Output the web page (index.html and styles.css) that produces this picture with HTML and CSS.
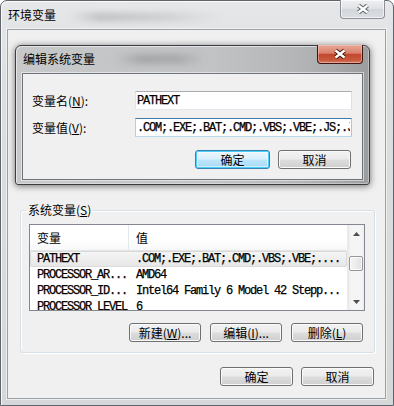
FILE: index.html
```html
<!DOCTYPE html>
<html lang="zh-CN">
<head>
<meta charset="utf-8">
<title>环境变量</title>
<link rel="stylesheet" href="styles.css">
</head>
<body>
<div class="window">
  <div class="titlebar">
    <span class="title">环境变量</span>
    <span class="haze haze-outer"></span>
    <span class="close close-inactive">
      <svg width="18" height="12" viewBox="0 0 18 12"><path d="M4.5 2.5 L13.5 9.5 M13.5 2.5 L4.5 9.5" stroke="#5d6166" stroke-width="4.4" fill="none"/><path d="M4.5 2.5 L13.5 9.5 M13.5 2.5 L4.5 9.5" stroke="#fff" stroke-width="2.4" fill="none"/></svg>
    </span>
  </div>
  <div class="client">
    <fieldset class="group">
      <legend>系统变量(<u>S</u>)</legend>
      <div class="listview">
        <div class="lv-body">
          <div class="lv-header">
            <div class="col c1">变量</div>
            <div class="col c2">值</div>
          </div>
          <div class="lv-row sel"><div class="col c1 mono">PATHEXT</div><div class="col c2 mono">.COM;.EXE;.BAT;.CMD;.VBS;.VBE;....</div></div>
          <div class="lv-row"><div class="col c1 mono">PROCESSOR_AR...</div><div class="col c2 mono">AMD64</div></div>
          <div class="lv-row"><div class="col c1 mono">PROCESSOR_ID...</div><div class="col c2 mono">Intel64 Family 6 Model 42 Stepp...</div></div>
          <div class="lv-row"><div class="col c1 mono">PROCESSOR_LEVEL</div><div class="col c2 mono">6</div></div>
        </div>
        <div class="vscroll">
          <div class="sb-btn"><svg width="7" height="4" viewBox="0 0 7 4"><path d="M0 4 L3.5 0 L7 4 Z" fill="#4d4d4d"/></svg></div>
          <div class="sb-track"><div class="sb-thumb"></div></div>
          <div class="sb-btn"><svg width="7" height="4" viewBox="0 0 7 4"><path d="M0 0 L3.5 4 L7 0 Z" fill="#4d4d4d"/></svg></div>
        </div>
      </div>
      <div class="btnrow group-btns">
        <button class="btn w72">新建(<u>W</u>)...</button>
        <button class="btn w72">编辑(<u>I</u>)...</button>
        <button class="btn w72">删除(<u>L</u>)</button>
      </div>
    </fieldset>
    <div class="btnrow bottom-btns">
      <button class="btn w73">确定</button>
      <button class="btn w73">取消</button>
    </div>
  </div>

  <div class="dialog">
    <div class="dlg-titlebar">
      <span class="dlg-title">编辑系统变量</span>
      <span class="haze haze-inner"></span>
      <span class="close close-active">
        <svg width="18" height="12" viewBox="0 0 18 12"><path d="M4.5 2.5 L13.5 9.5 M13.5 2.5 L4.5 9.5" stroke="#4a1a14" stroke-width="4.4" fill="none"/><path d="M4.5 2.5 L13.5 9.5 M13.5 2.5 L4.5 9.5" stroke="#fff" stroke-width="2.4" fill="none"/></svg>
      </span>
    </div>
    <div class="dlg-client">
      <div class="form">
        <label class="lbl">变量名(<u>N</u>):</label>
        <input class="textbox mono" readonly value="PATHEXT">
        <label class="lbl">变量值(<u>V</u>):</label>
        <input class="textbox focused mono" readonly value=".COM;.EXE;.BAT;.CMD;.VBS;.VBE;.JS;.JSE;.WSF;.WSH;.MSC">
      </div>
      <div class="btnrow dlg-btns">
        <button class="btn btn-default w75">确定</button>
        <button class="btn w73">取消</button>
      </div>
    </div>
  </div>
</div>
</body>
</html>
```

FILE: styles.css
```css
* { box-sizing: border-box; }
html, body { margin: 0; padding: 0; }
body {
  width: 394px;
  height: 406px;
  overflow: hidden;
  background: #fff;
  font-family: "Noto Sans CJK SC", "Noto Sans", sans-serif;
  font-size: 12px;
  color: #000;
}
u { text-decoration: underline; text-underline-offset: 1px; }

.mono {
  font-family: "Liberation Mono", "DejaVu Sans Mono", monospace;
  font-size: 12px;
  letter-spacing: -1.2px;
  -webkit-text-stroke: 0.25px #000;
}

/* ---------- outer window ---------- */
.window {
  position: relative;
  width: 394px;
  height: 406px;
  border: 1px solid #5f656c;
  border-radius: 7px 7px 0 0;
  background: linear-gradient(to bottom, #e6e7e9 0%, #dcdee0 20%, #d5d7d9 100%);
  box-shadow: inset 1px 1px 0 rgba(255,255,255,0.8);
  display: flex;
  flex-direction: column;
  padding: 0 7px 6px 6px;
}
.titlebar {
  height: 28px;
  display: flex;
  align-items: flex-start;
  flex: none;
}
.title {
  padding: 7px 0 0 1px;
  line-height: 14px;
  color: #000;
}
.haze {
  display: block;
  filter: blur(3px);
}
.haze-outer {
  width: 150px;
  height: 8px;
  margin: 12px 0 0 14px;
  background: linear-gradient(to right, rgba(120,120,120,0.0), rgba(120,120,120,0.35) 20%, rgba(130,130,130,0.25) 60%, rgba(150,150,150,0.0));
}
.close {
  margin-left: auto;
  display: flex;
  align-items: center;
  justify-content: center;
  width: 45px;
  height: 19px;
  margin-top: -1px;
  margin-right: 1px;
  border-radius: 0 0 4px 4px;
}
.close-inactive {
  border: 1px solid #8d9197;
  border-top: none;
  background: linear-gradient(to bottom, #eef0f2 0%, #dfe2e5 50%, #d3d6da 51%, #dadde1 100%);
  box-shadow: inset 0 0 0 1px rgba(255,255,255,0.6);
}

.client {
  flex: 1;
  background: #f0f0f0;
  border: 1px solid #9ba1a8;
  box-shadow: 0 0 0 1px rgba(255,255,255,0.55);
  display: flex;
  flex-direction: column;
}

/* ---------- group box ---------- */
.group {
  margin: 173px 10px 0 12px;
  padding: 7px 9px 10px 8px;
  border: 1px solid #d5dfe5;
  border-radius: 3px;
  box-shadow: inset 1px 1px 0 #fff, 1px 1px 0 #fff;
  min-width: 0;
}
.group legend {
  padding: 0 2px;
  margin-left: -3px;
  line-height: 14px;
  font-size: 12px;
}

.listview {
  height: 87px;
  display: flex;
  border: 1px solid #828790;
  background: #fff;
  overflow: hidden;
}
.lv-body {
  flex: 1;
  min-width: 0;
  overflow: hidden;
}
.lv-header {
  display: flex;
  height: 26px;
  border-bottom: 1px solid #e5e5e5;
  background: linear-gradient(to bottom, #ffffff 0%, #ffffff 60%, #f6f7f8 100%);
}
.lv-header .col {
  line-height: 25px;
}
.lv-header .c1 {
  border-right: 1px solid #e3e8ee;
}
.col {
  white-space: nowrap;
  overflow: hidden;
}
.c1 { width: 99px; flex: none; padding-left: 7px; }
.c2 { flex: 1; padding-left: 7px; }
.lv-row {
  display: flex;
  height: 16px;
  line-height: 16px;
}
.lv-row.sel {
  background: linear-gradient(to bottom, #f6f6f6, #e6e6e6);
  box-shadow: inset 0 0 0 1px #dadada;
  border-radius: 2px;
}

.vscroll {
  width: 17px;
  flex: none;
  display: flex;
  flex-direction: column;
  background: linear-gradient(to right, #e9e9e9 0%, #f5f5f5 20%, #f5f5f5 80%, #ededed 100%);
  border-left: 1px solid #eaeaea;
}
.sb-btn {
  height: 17px;
  display: flex;
  align-items: center;
  justify-content: center;
  flex: none;
}
.sb-track { flex: 1; }
.sb-thumb {
  margin: 14px 1px 0 1px;
  height: 15px;
  border: 1px solid #979797;
  border-radius: 2px;
  background: linear-gradient(to right, #f4f4f4 0%, #ececec 50%, #e0e0e0 100%);
  box-shadow: inset 0 0 0 1px rgba(255,255,255,0.8);
}

/* ---------- buttons ---------- */
.btnrow {
  display: flex;
  justify-content: flex-end;
}
.group-btns {
  margin-top: 12px;
  gap: 9px;
  padding-right: 2px;
}
.bottom-btns {
  margin-top: 14px;
  gap: 8px;
  padding-right: 11px;
}
.btn {
  height: 19px;
  padding: 0;
  margin: 0;
  font-family: "Noto Sans CJK SC", "Noto Sans", sans-serif;
  font-size: 12px;
  line-height: 16px;
  color: #000;
  border: 1px solid #707070;
  border-radius: 3px;
  background: linear-gradient(to bottom, #f2f2f2 0%, #ebebeb 48%, #dddddd 52%, #cfcfcf 100%);
  box-shadow: inset 0 0 0 1px #fafafa;
  white-space: nowrap;
}
.w72 { width: 72px; }
.w73 { width: 73px; }
.w75 { width: 75px; }
.btn-default {
  border-color: #3c7fb1;
  background: linear-gradient(to bottom, #eaf6fd 0%, #d9f0fc 48%, #bee6fd 52%, #a7d9f5 100%);
  box-shadow: inset 0 0 0 1px #48d0fb, inset 0 0 0 2px rgba(255,255,255,0.5);
}

/* ---------- inner dialog ---------- */
.dialog {
  position: absolute;
  left: 14px;
  top: 44px;
  width: 355px;
  border: 1px solid #3a3d41;
  border-radius: 6px 6px 3px 3px;
  background: linear-gradient(to right, #c7c8c9 0%, #c2c3c5 55%, #b4b5b7 80%, #9c9d9f 100%);
  box-shadow: 0 1px 7px rgba(0,0,0,0.55), inset 1px 1px 0 rgba(255,255,255,0.55), inset -1px -1px 0 rgba(255,255,255,0.35);
  padding: 0 6px 4px 6px;
  display: flex;
  flex-direction: column;
}
.dlg-titlebar {
  height: 27px;
  display: flex;
  align-items: flex-start;
}
.dlg-title {
  padding: 6px 0 0 1px;
  line-height: 14px;
}
.haze-inner {
  width: 90px;
  height: 10px;
  margin: 8px 0 0 20px;
  background: linear-gradient(to right, rgba(110,110,110,0), rgba(110,110,110,0.35) 30%, rgba(110,110,110,0.3) 70%, rgba(110,110,110,0));
}
.close-active {
  width: 46px;
  margin-right: 0;
  border: 1px solid #3b1511;
  border-top: none;
  background: linear-gradient(to bottom, #e7a796 0%, #d9836e 45%, #c4472f 52%, #c65a3e 85%, #d9826a 100%);
  box-shadow: inset 0 0 0 1px rgba(255,210,200,0.45);
}
.dlg-client {
  background: #f0f0f0;
  border: 1px solid #6f747a;
  box-shadow: 0 0 0 1px rgba(255,255,255,0.5);
  padding: 17px 10px 10px 9px;
}
.form {
  display: grid;
  grid-template-columns: 103px 1fr;
  row-gap: 8px;
  align-items: center;
}
.lbl {
  line-height: 19px;
  white-space: nowrap;
}
.textbox {
  height: 19px;
  width: 100%;
  margin: 0;
  padding: 0 1px;
  border: 1px solid;
  border-color: #abadb3 #dbdfe6 #e3e9ef #e2e3ea;
  background: #fff;
  color: #000;
  outline: none;
}
.textbox.focused {
  border-color: #3d7bad #a4c9e3 #b7d9ed #b5cfe7;
}
.dlg-btns {
  margin-top: 13px;
  gap: 8px;
  padding-right: 1px;
}
```
